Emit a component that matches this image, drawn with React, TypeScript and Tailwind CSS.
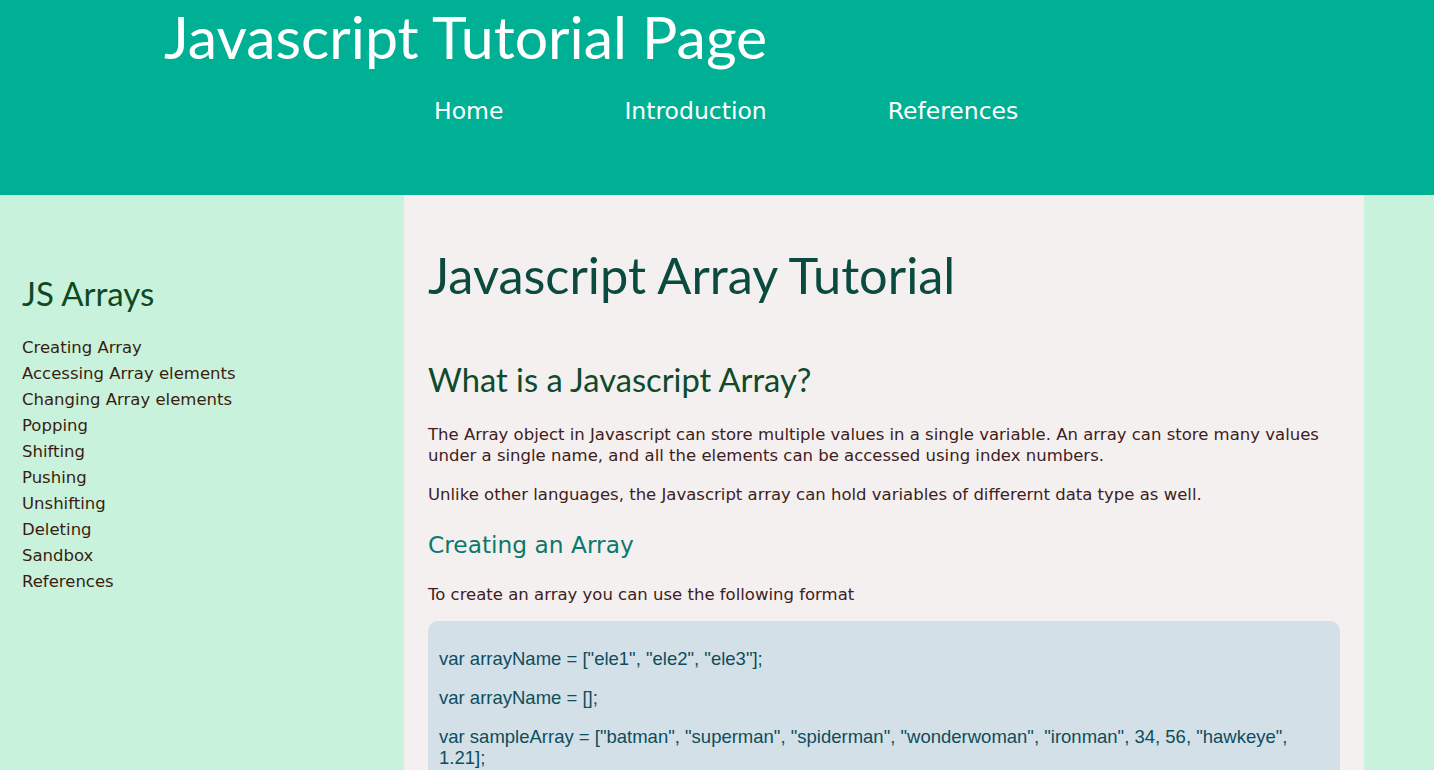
const links = [
  "Creating Array",
  "Accessing Array elements",
  "Changing Array elements",
  "Popping",
  "Shifting",
  "Pushing",
  "Unshifting",
  "Deleting",
  "Sandbox",
  "References",
];

const nav = ["Home", "Introduction", "References"];

const heading = "font-['Lato',sans-serif]";
const body = "font-['DejaVu_Sans',sans-serif]";

export default function App() {
  return (
    <div className="min-h-screen bg-[#c8f2dc]">
      <header className="h-[195px] bg-[#00b094] text-white">
        <h1 className={`${heading} pl-[164px] pt-[4px] text-[59px] leading-[66px]`}>
          Javascript Tutorial Page
        </h1>
        <nav className={`${body} ml-[434px] mt-[26px] flex gap-[121px] text-[23.5px] leading-[30px]`}>
          {nav.map((n) => (
            <a key={n} href="#">
              {n}
            </a>
          ))}
        </nav>
      </header>

      <div className="flex">
        <aside className="w-[404px] shrink-0 bg-[#c8f2dc] pl-[22px] pt-[78px]">
          <h2 className={`${heading} text-[33px] leading-[40px] text-[#0d4a23]`}>JS Arrays</h2>
          <ul className={`${body} mt-[22px] text-[16.5px] leading-[26px] text-[#3b1d0f]`}>
            {links.map((l) => (
              <li key={l}>
                <a href="#">{l}</a>
              </li>
            ))}
          </ul>
        </aside>

        <main className="w-[960px] shrink-0 bg-[#f5f0f0] px-[24px] pt-[50px] pb-10">
          <h1 className={`${heading} text-[50.5px] leading-[60px] text-[#0b4a3f]`}>
            Javascript Array Tutorial
          </h1>
          <h2 className={`${heading} mt-[55px] text-[32.7px] leading-[40px] text-[#0f4a2a]`}>
            What is a Javascript Array?
          </h2>
          <div className={`${body} text-[16.5px] leading-[21px] text-[#3d2020]`}>
            <p className="mt-[24px]">
              The Array object in Javascript can store multiple values in a single variable. An array can store many
              values under a single name, and all the elements can be accessed using index numbers.
            </p>
            <p className="mt-[18px]">
              Unlike other languages, the Javascript array can hold variables of differernt data type as well.
            </p>
          </div>
          <h3 className={`${body} mt-[24px] text-[23.3px] leading-[32px] text-[#0a7a6a]`}>Creating an Array</h3>
          <p className={`${body} mt-[23px] text-[16.5px] leading-[21px] text-[#3d2020]`}>
            To create an array you can use the following format
          </p>
          <div className="mt-[16px] rounded-[10px] bg-[#d3e0e8] px-[11px] pt-[27px] pb-[20px] font-['Liberation_Sans',Arial,sans-serif] text-[18.5px] leading-[21px] text-[#0e4d5c]">
            <p>var arrayName = ["ele1", "ele2", "ele3"];</p>
            <p className="mt-[18px]">var arrayName = [];</p>
            <p className="mt-[18px]">
              var sampleArray = ["batman", "superman", "spiderman", "wonderwoman", "ironman", 34, 56, "hawkeye",
              1.21];
            </p>
          </div>
        </main>

        <div className="flex-1 bg-[#c8f2dc]" />
      </div>
    </div>
  );
}
